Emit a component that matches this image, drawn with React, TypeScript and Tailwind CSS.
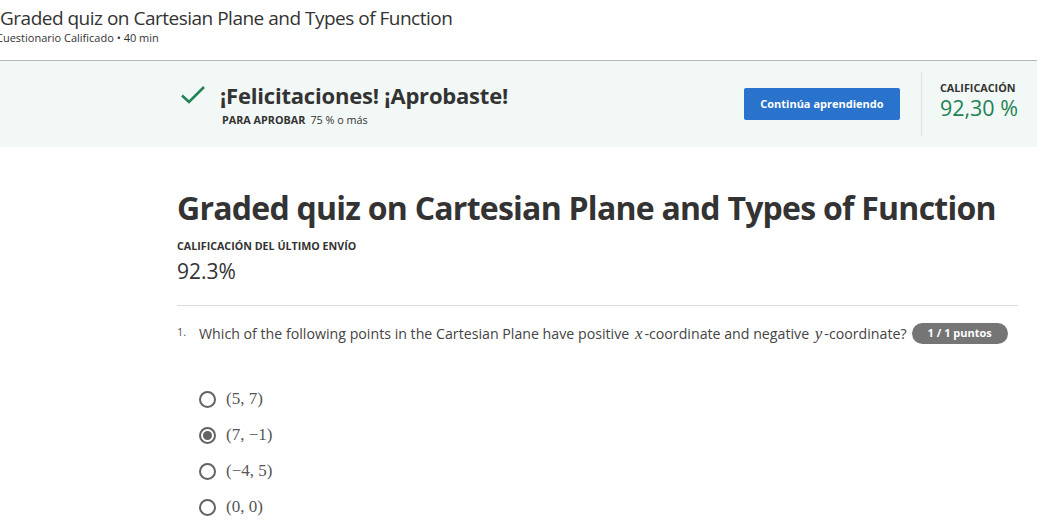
import React from "react";

const options = [
    { label: "(5, 7)", checked: false },
    { label: "(7, −1)", checked: true },
    { label: "(−4, 5)", checked: false },
    { label: "(0, 0)", checked: false },
];

const Radio = ({ checked }: { checked: boolean }) => (
    <span className="flex h-[17px] w-[17px] items-center justify-center rounded-full border-2 border-[#636363] bg-white">
        {checked && <span className="h-[9px] w-[9px] rounded-full bg-[#636363]" />}
    </span>
);

const App = () => {
    return (
        <div className="min-h-[532px] bg-white font-['Open_Sans',sans-serif] text-[#373a3c]">
            {/* header */}
            <header className="h-[61px] border-b border-[#b4b9b8] pt-[6px]">
                <h1 className="text-[19px] leading-[25px] tracking-[-0.5px] text-[#333]">
                    Graded quiz on Cartesian Plane and Types of Function
                </h1>
                <p className="-ml-[4px] text-[11px] leading-[14px] text-[#333]">
                    Cuestionario Calificado • 40 min
                </p>
            </header>

            {/* result banner */}
            <section className="flex h-[86px] items-center bg-[#f2f8f6] pl-[180px] pr-[19px]">
                <svg
                    width="26"
                    height="20"
                    viewBox="0 0 26 20"
                    className="mr-[14px] -mt-[18px]"
                >
                    <path
                        d="M2 10.5 L9 17 L24 2"
                        fill="none"
                        stroke="#1f8354"
                        strokeWidth="2.6"
                    />
                </svg>
                <div className="-mt-[2px]">
                    <h2 className="text-[22px] font-bold leading-[30px] tracking-[-0.2px] text-[#333]">
                        ¡Felicitaciones! ¡Aprobaste!
                    </h2>
                    <p className="mt-[3px] pl-[2px] text-[10.8px] leading-[14px] text-[#333]">
                        <span className="font-bold">PARA APROBAR</span>
                        <span className="ml-[5px]">75 % o más</span>
                    </p>
                </div>
                <div className="ml-auto flex h-full items-center">
                    <button className="h-[32px] w-[156px] rounded-[2px] bg-[#2a73cc] text-[11px] font-bold text-white">
                        Continúa aprendiendo
                    </button>
                    <div className="ml-[21px] mr-[18px] h-[64px] w-px bg-[#dfe3e2]" />
                    <div className="-mt-[6px] whitespace-nowrap">
                        <p className="text-[10.8px] font-bold leading-[14px] text-[#333]">
                            CALIFICACIÓN
                        </p>
                        <p className="text-[21.5px] leading-[26px] text-[#1f8354]">
                            92,30 %
                        </p>
                    </div>
                </div>
            </section>

            {/* main */}
            <main className="pl-[177px] pr-[19px] pt-[41px]">
                <h1 className="whitespace-nowrap text-[32px] font-bold leading-[40px] tracking-[-0.75px] text-[#333]">
                    Graded quiz on Cartesian Plane and Types of Function
                </h1>
                <p className="mt-[11px] text-[10.7px] font-bold leading-[14px] text-[#333]">
                    CALIFICACIÓN DEL ÚLTIMO ENVÍO
                </p>
                <p className="mt-[5px] text-[21px] leading-[26px] text-[#333]">
                    92.3%
                </p>
                <div className="mt-[21px] h-px bg-[#dcdcdc]" />

                <div className="mt-[17px] flex items-center">
                    <span className="w-[22px] self-start pt-[1px] text-[11px] text-[#555]">
                        1.
                    </span>
                    <p className="whitespace-nowrap text-[14.2px] leading-[20px] text-[#444]">
                        Which of the following points in the Cartesian Plane have positive{" "}
                        <span className="pl-[2px] pr-[2px] font-['Liberation_Serif',serif] text-[17px] italic">x</span>
                        -coordinate and negative{" "}
                        <span className="pl-[2px] pr-[2px] font-['Liberation_Serif',serif] text-[17px] italic">y</span>
                        -coordinate?
                    </p>
                    <span className="ml-[5px] flex h-[21px] items-center rounded-full bg-[#757575] px-[16px] text-[11px] font-bold text-white">
                        1 / 1 puntos
                    </span>
                </div>

                <ul className="mt-[46px] flex flex-col gap-[18px] pl-[22px]">
                    {options.map((o, idx) => (
                        <li key={idx} className="flex h-[18px] items-center">
                            <Radio checked={o.checked} />
                            <span className="ml-[10px] font-['Liberation_Serif',serif] text-[17px] text-[#555]">
                                {o.label}
                            </span>
                        </li>
                    ))}
                </ul>
            </main>
        </div>
    );
};

export default App;
